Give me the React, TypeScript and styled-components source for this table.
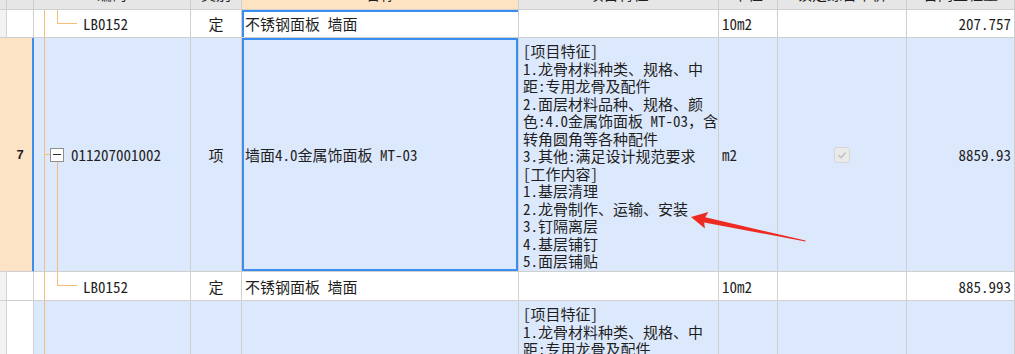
import styled, { createGlobalStyle } from "styled-components";

const GlobalStyle = createGlobalStyle`
  html, body {
    margin: 0;
    padding: 0;
    background: #ffffff;
    overflow: hidden;
  }
  body {
    font-family: "Noto Sans Mono CJK SC", "Noto Sans CJK SC", sans-serif;
    font-size: 15px;
    color: #1f1f1f;
  }
`;

const LINE = "#cfcfcf";
const TREE = "#f6bd78";
const SEL = "#3b8df0";
const ROW_BLUE = "#dce8fb";
const PEACH = "#fde3c6";

const COLS = "7px 27px 157px 51px 277px 200px 59px 129px 108px";

const Screen = styled.div`
  position: relative;
  width: 1015px;
  height: 354px;
  overflow: hidden;
`;

const Table = styled.div`
  margin-top: -19px;
`;

const Row = styled.div<{ $h: number }>`
  display: grid;
  grid-template-columns: ${COLS};
  height: ${(p) => p.$h}px;
`;

const Cell = styled.div<{ $bg?: string; $align?: "left" | "center" | "right" }>`
  box-sizing: border-box;
  min-width: 0;
  border-right: 1px solid ${LINE};
  border-bottom: 1px solid ${LINE};
  background-color: ${(p) => p.$bg ?? "#ffffff"};
  display: flex;
  align-items: center;
  justify-content: ${(p) =>
    p.$align === "center" ? "center" : p.$align === "right" ? "flex-end" : "flex-start"};
  padding: 0 3px;
  white-space: nowrap;
  overflow: hidden;
`;

const HeadCell = styled(Cell)`
  padding-bottom: 3px;
  background-color: ${(p) => p.$bg ?? "#e6e6e6"};
`;

const Gutter = styled(Cell)<{ $on?: boolean }>`
  padding: 0;
  background-color: ${(p) => (p.$on ? PEACH : "#f3f3f3")};
  border-right-color: ${(p) => (p.$on ? PEACH : "#d4d4d4")};
`;

const RowNum = styled(Cell)<{ $on?: boolean }>`
  padding: 0;
  justify-content: center;
  font-family: "Liberation Sans", sans-serif;
  font-weight: bold;
  font-size: 13px;
  background-color: ${(p) => (p.$on ? PEACH : "#ffffff")};
  border-right-color: ${(p) => (p.$on ? SEL : LINE)};
  box-shadow: ${(p) => (p.$on ? `inset -1px 0 0 ${SEL}` : "none")};
`;

// tree connectors drawn with background gradients
const CodeCell = styled(Cell)<{ $kind: "parent" | "child" | "line" }>`
  background-repeat: no-repeat;
  ${(p) =>
    p.$kind === "parent"
      ? `
    padding-left: 16px;
    background-image: linear-gradient(${TREE}, ${TREE}), linear-gradient(${TREE}, ${TREE}), linear-gradient(${TREE}, ${TREE});
    background-size: 1px 100%, 6px 1px, 1px calc(50% - 7px);
    background-position: 10px 0, 10px 50%, 23px 100%;
  `
      : p.$kind === "child"
      ? `
    padding-left: 49px;
    background-image: linear-gradient(${TREE}, ${TREE}), linear-gradient(${TREE}, ${TREE}), linear-gradient(${TREE}, ${TREE});
    background-size: 1px 100%, 1px 14px, 20px 1px;
    background-position: 10px 0, 23px 0, 23px 13px;
  `
      : `
    background-image: linear-gradient(${TREE}, ${TREE});
    background-size: 1px 100%;
    background-position: 10px 0;
  `}
`;

const Collapse = styled.span`
  box-sizing: border-box;
  width: 14px;
  height: 14px;
  flex: none;
  border: 1px solid #8f8f8f;
  background: #ffffff;
  display: flex;
  align-items: center;
  justify-content: center;
  margin-right: 7px;
  &::before {
    content: "";
    width: 8px;
    height: 1px;
    background: #303030;
  }
`;

const NameCell = styled(Cell)<{ $sel?: boolean; $edge?: boolean }>`
  box-shadow: ${(p) =>
    p.$sel ? `inset 0 0 0 2px ${SEL}` : p.$edge ? `inset 2px 2px 0 ${SEL}` : "none"};
`;

const FeatureCell = styled(Cell)`
  flex-direction: column;
  align-items: flex-start;
  justify-content: flex-start;
  padding: 4px 4px 0;
  line-height: 17.5px;
`;

const Check = styled.span`
  box-sizing: border-box;
  width: 16px;
  height: 16px;
  border: 1px solid #d6d6d6;
  border-radius: 3px;
  background: #eaeaea;
  display: flex;
  align-items: center;
  justify-content: center;
`;

const Overlay = styled.svg`
  position: absolute;
  left: 0;
  top: 0;
  pointer-events: none;
`;

const feat7 = [
  "[项目特征]",
  "1.龙骨材料种类、规格、中",
  "距:专用龙骨及配件",
  "2.面层材料品种、规格、颜",
  "色:4.0金属饰面板 MT-03，含",
  "转角圆角等各种配件",
  "3.其他:满足设计规范要求",
  "[工作内容]",
  "1.基层清理",
  "2.龙骨制作、运输、安装",
  "3.钉隔离层",
  "4.基层铺钉",
  "5.面层铺贴",
];

const heads = [
  { t: "编码" },
  { t: "类别" },
  { t: "名称", bg: "#fde3c2" },
  { t: "项目特征" },
  { t: "单位" },
  { t: "锁定综合单价" },
  { t: "合同工程量" },
];

function ChildRow({ h, qty }: { h: number; qty: string }) {
  return (
    <Row $h={h}>
      <Gutter />
      <RowNum />
      <CodeCell $kind="child">LB0152</CodeCell>
      <Cell $align="center">定</Cell>
      <NameCell $edge={qty === "207.757"}>不锈钢面板 墙面</NameCell>
      <Cell />
      <Cell>10m2</Cell>
      <Cell />
      <Cell $align="right">{qty}</Cell>
    </Row>
  );
}

export default function App() {
  return (
    <>
      <GlobalStyle />
      <Screen>
        <Table>
          <Row $h={29}>
            <HeadCell />
            <HeadCell />
            {heads.map((c) => (
              <HeadCell key={c.t} $align="center" $bg={c.bg}>
                {c.t}
              </HeadCell>
            ))}
          </Row>

          <ChildRow h={28} qty="207.757" />

          <Row $h={234}>
            <Gutter $on />
            <RowNum $on>7</RowNum>
            <CodeCell $kind="parent" $bg={ROW_BLUE}>
              <Collapse />
              011207001002
            </CodeCell>
            <Cell $align="center" $bg={ROW_BLUE}>项</Cell>
            <NameCell $sel $bg={ROW_BLUE}>墙面4.0金属饰面板 MT-03</NameCell>
            <FeatureCell $bg={ROW_BLUE}>
              {feat7.map((l) => (
                <div key={l}>{l}</div>
              ))}
            </FeatureCell>
            <Cell $bg={ROW_BLUE}>m2</Cell>
            <Cell $align="center" $bg={ROW_BLUE}>
              <Check>
                <svg width="12" height="12" viewBox="0 0 12 12">
                  <path d="M2.5 6.2 L5 8.6 L9.6 3.6" fill="none" stroke="#c2c2c2" strokeWidth="1.6" />
                </svg>
              </Check>
            </Cell>
            <Cell $align="right" $bg={ROW_BLUE}>8859.93</Cell>
          </Row>

          <ChildRow h={29} qty="885.993" />

          <Row $h={234}>
            <Gutter />
            <RowNum />
            <CodeCell $kind="line" $bg={ROW_BLUE} />
            <Cell $bg={ROW_BLUE} />
            <Cell $bg={ROW_BLUE} />
            <FeatureCell $bg={ROW_BLUE}>
              {feat7.slice(0, 3).map((l) => (
                <div key={l}>{l}</div>
              ))}
            </FeatureCell>
            <Cell $bg={ROW_BLUE} />
            <Cell $bg={ROW_BLUE} />
            <Cell $bg={ROW_BLUE} />
          </Row>
        </Table>

        <Overlay width="1015" height="354" viewBox="0 0 1015 354">
          <polygon
            transform="translate(691 217) rotate(11.8)"
            points="0,0 16,-8.5 14,-2.6 117,-0.4 117,0.6 14,2.6 16,8.5"
            fill="#ee2a22"
          />
        </Overlay>
      </Screen>
    </>
  );
}
